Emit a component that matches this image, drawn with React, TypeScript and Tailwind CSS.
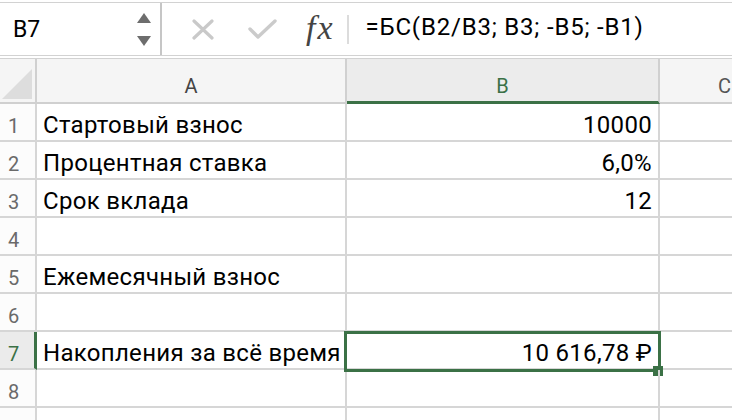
import React from 'react';

const GREEN = '#3b7146';

const rows: { n: number; a: string; b: string }[] = [
  { n: 1, a: 'Стартовый взнос', b: '10000' },
  { n: 2, a: 'Процентная ставка', b: '6,0%' },
  { n: 3, a: 'Срок вклада', b: '12' },
  { n: 4, a: '', b: '' },
  { n: 5, a: 'Ежемесячный взнос', b: '' },
  { n: 6, a: '', b: '' },
  { n: 7, a: 'Накопления за всё время', b: '10 616,78 ₽' },
  { n: 8, a: '', b: '' },
  { n: 9, a: '', b: '' },
];

function FormulaBar() {
  return (
    <div className="mt-[2px] border-t border-[#d2d2d2]">
      <div className="flex h-[52px] items-center">
        <div className="flex h-full w-[162px] items-center justify-between border-r-2 border-[#c6c6c6] pl-[13px] pr-[9px]">
          <span className="text-[23px] leading-none text-black">B7</span>
          <div className="flex flex-col items-center gap-[13px]">
            <svg width="14" height="10" viewBox="0 0 14 10"><path d="M7 0 L14 10 L0 10 Z" fill="#6d6d6d" /></svg>
            <svg width="14" height="10" viewBox="0 0 14 10"><path d="M0 0 L14 0 L7 10 Z" fill="#6d6d6d" /></svg>
          </div>
        </div>
        <div className="ml-[30px] flex items-center">
          <svg width="22" height="21" viewBox="0 0 22 21">
            <path d="M2 2 L20 19 M20 2 L2 19" stroke="#c9c9c9" strokeWidth="3.2" strokeLinecap="round" fill="none" />
          </svg>
        </div>
        <div className="ml-[34px] flex items-center">
          <svg width="29" height="22" viewBox="0 0 29 22">
            <path d="M2 11 L10 19 L27 3" stroke="#cbcbcb" strokeWidth="3.4" strokeLinecap="round" strokeLinejoin="round" fill="none" />
          </svg>
        </div>
        <span className="ml-[29px] pb-[3px] font-['Liberation_Serif',serif] text-[34px] italic leading-none tracking-[2px] text-[#444]">fx</span>
        <div className="ml-[12px] h-[29px] w-[2px] bg-[#dcdcdc]" />
        <span className="ml-[17px] pb-[5px] text-[24px] leading-none tracking-[0.8px] text-black">=БС(B2/B3; B3; -B5; -B1)</span>
      </div>
      <div className="h-[4px] border-y border-[#d2d2d2] bg-white" />
    </div>
  );
}

function HeaderRow() {
  return (
    <div className="grid h-[45px] grid-cols-[37px_310px_313px_1fr] bg-[#f5f5f5] text-[20px] leading-none">
      <div className="flex items-end justify-end border-r-2 border-b-2 border-[#d0d0d0] pb-[3px] pr-[3px]">
        <svg width="30" height="30" viewBox="0 0 30 30"><path d="M30 0 L30 30 L0 30 Z" fill="#dddddd" /></svg>
      </div>
      <div className="flex items-end justify-center border-r-2 border-b-2 border-[#d0d0d0] pb-[6px] text-[#444]">A</div>
      <div className="flex items-end justify-center border-r-2 border-b-[3px] border-r-[#d0d0d0] border-b-[#3b7146] bg-[#ececec] pb-[5px] text-[#3b7146]">B</div>
      <div className="flex items-end border-b-2 border-[#d0d0d0] pb-[6px] pl-[58px] text-[#555]">C</div>
    </div>
  );
}

export default function App() {
  return (
    <div className="h-[420px] w-[732px] overflow-hidden bg-white font-['Roboto',sans-serif]">
      <FormulaBar />
      <HeaderRow />
      {rows.map(r => {
        const sel = r.n === 7;
        return (
          <div key={r.n} className="grid h-[38px] grid-cols-[37px_310px_313px_1fr] leading-none">
            <div
              className={
                sel
                  ? 'flex items-end border-b-2 border-r-[3px] border-b-[#d6d6d6] border-r-[#3b7146] bg-[#ebebeb] pb-[4px] pl-[8px] text-[20px] text-[#3b7146]'
                  : 'flex items-end border-r-2 border-b-2 border-[#d6d6d6] bg-[#fcfcfc] pb-[4px] pl-[8px] text-[20px] text-[#6a6a6a]'
              }
            >
              {r.n < 9 ? r.n : ''}
            </div>
            <div className="flex items-end overflow-visible whitespace-nowrap border-r-2 border-b-2 border-[#d6d6d6] pb-[3px] pl-[6px] text-[24px] tracking-[0.3px] text-black">
              {r.a}
            </div>
            <div className="relative flex items-end justify-end border-r-2 border-b-2 border-[#d6d6d6] pb-[3px] pr-[6px] text-[24px] tracking-[0.3px] text-black">
              {r.b}
              {sel && (
                <>
                  <div className="absolute -top-[1px] -left-[3px] -right-[3px] -bottom-[4px] border-[3px]" style={{ borderColor: GREEN }} />
                  <div className="absolute -right-[5px] -bottom-[8px] h-[10px] w-[10px]" style={{ background: GREEN }} />
                </>
              )}
            </div>
            <div className="border-b-2 border-[#d6d6d6]" />
          </div>
        );
      })}
    </div>
  );
}
